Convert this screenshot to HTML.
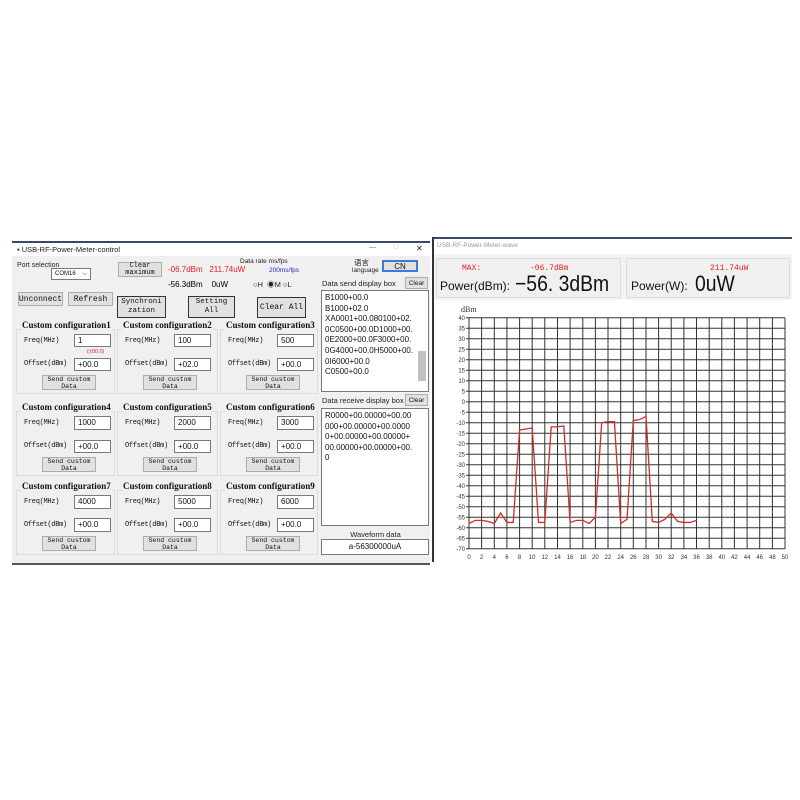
<!DOCTYPE html>
<html><head><meta charset="utf-8"><style>
body{margin:0;width:800px;height:800px;background:#fff;position:relative;overflow:hidden;font-family:"Liberation Sans","Noto Sans CJK SC",sans-serif;}
.a{position:absolute;white-space:nowrap;}
.t{font-size:7px;color:#222;}
.m{font-family:"Liberation Mono",monospace;}
.btn{position:absolute;background:#e1e1e1;border:1px solid #adadad;box-sizing:border-box;font-family:"Liberation Mono",monospace;font-size:7px;text-align:center;line-height:7px;color:#111;display:flex;align-items:center;justify-content:center;}
.inp{position:absolute;background:#fff;border:1px solid #7a7a7a;box-sizing:border-box;font-size:8px;line-height:11px;padding-left:3px;color:#111;}
.grp{position:absolute;border:1px solid #dcdcdc;box-sizing:border-box;}
.gh{position:absolute;font-family:"Liberation Serif",serif;font-weight:bold;font-size:9px;background:#f0f0f0;padding:0 1px;color:#111;}
.lab{position:absolute;font-family:"Liberation Mono",monospace;font-size:7px;letter-spacing:-0.3px;color:#111;}
.red{color:#d22;}
</style></head><body>
<div class="a" style="left:12px;top:241px;width:418px;height:320px;background:#f0f0f0;border-top:2px solid #3a4a66;border-bottom:2px solid #555;"></div>
<div class="a" style="left:12px;top:243px;width:418px;height:13px;background:#fff;"></div>
<div class="a t" style="left:17px;top:245px;font-size:7.5px;">▪ USB-RF-Power-Meter-control</div>
<div class="a t" style="left:369px;top:244px;color:#666;">—</div>
<div class="a t" style="left:394px;top:244px;color:#bbb;">□</div>
<div class="a t" style="left:416px;top:244px;font-size:8px;">✕</div>

<div class="a t" style="left:17px;top:262px;">Port selection</div>
<div class="inp" style="left:51px;top:268px;width:40px;height:12px;font-size:6px;line-height:10px;">COM16 <span style="float:right;margin-right:3px">⌵</span></div>
<div class="btn" style="left:118px;top:262px;width:44px;height:15px;">Clear<br>maximum</div>
<div class="a red" style="left:168px;top:265px;font-size:8px;">-06.7dBm&nbsp;&nbsp;&nbsp;211.74uW</div>
<div class="a" style="left:168px;top:280px;font-size:8px;">-56.3dBm&nbsp;&nbsp;&nbsp;&nbsp;0uW</div>
<div class="a t" style="left:240px;top:258px;font-size:6.5px;">Data rate ms/fps</div>
<div class="a" style="left:269px;top:267px;font-size:6.5px;color:#22c;">200ms/fps</div>
<div class="a t" style="left:253px;top:279px;font-size:7.5px;">○H&nbsp;&nbsp;◉M ○L</div>
<div class="a t" style="left:354px;top:257px;font-size:7.5px;">语言</div>
<div class="a t" style="left:352px;top:267px;font-size:6.5px;">language</div>
<div class="btn" style="left:382px;top:260px;width:36px;height:12px;border:2px solid #3a7bd5;font-family:'Liberation Sans';font-size:8px;">CN</div>
<div class="a t" style="left:322px;top:279px;font-size:7.5px;">Data send display box</div>
<div class="btn" style="left:405px;top:277px;width:23px;height:12px;font-family:'Liberation Sans';font-size:6.5px;">Clear</div>
<div class="inp" style="left:321px;top:290px;width:108px;height:102px;font-size:8px;line-height:10.6px;padding-top:2px;overflow:hidden;">B1000+00.0<br>B1000+02.0<br>XA0001+00.080100+02.<br>0C0500+00.0D1000+00.<br>0E2000+00.0F3000+00.<br>0G4000+00.0H5000+00.<br>0I6000+00.0<br>C0500+00.0</div>
<div class="a" style="left:418px;top:351px;width:8px;height:30px;background:#c1c1c1;"></div>

<div class="btn" style="left:18px;top:292px;width:45px;height:14px;font-size:8px;">Unconnect</div>
<div class="btn" style="left:68px;top:292px;width:45px;height:14px;font-size:8px;">Refresh</div>
<div class="btn" style="left:117px;top:296px;width:49px;height:22px;border:1px solid #333;font-size:7.5px;line-height:9px;">Synchroni<br>zation</div>
<div class="btn" style="left:188px;top:296px;width:47px;height:22px;border:1px solid #333;font-size:7.5px;line-height:9px;">Setting<br>All</div>
<div class="btn" style="left:257px;top:297px;width:49px;height:21px;border:1px solid #333;font-size:8px;">Clear All</div>

<div class="grp" style="left:16px;top:329px;width:99px;height:65px;"></div><div class="gh" style="left:21px;top:320px;">Custom configuration1</div>
<div class="grp" style="left:117px;top:329px;width:101px;height:65px;"></div><div class="gh" style="left:122px;top:320px;">Custom configuration2</div>
<div class="grp" style="left:220px;top:329px;width:98px;height:65px;"></div><div class="gh" style="left:225px;top:320px;">Custom configuration3</div>
<div class="lab" style="left:24px;top:337px;">Freq(MHz)</div><div class="inp" style="left:74px;top:334px;width:37px;height:13px;">1</div>
<div class="lab" style="left:125px;top:337px;">Freq(MHz)</div><div class="inp" style="left:174px;top:334px;width:37px;height:13px;">100</div>
<div class="lab" style="left:228px;top:337px;">Freq(MHz)</div><div class="inp" style="left:277px;top:334px;width:37px;height:13px;">500</div>
<div class="a red" style="left:87px;top:349px;font-size:5.5px;">(±00.0)</div>
<div class="lab" style="left:24px;top:360px;">Offset(dBm)</div><div class="inp" style="left:74px;top:358px;width:37px;height:13px;">+00.0</div>
<div class="lab" style="left:125px;top:360px;">Offset(dBm)</div><div class="inp" style="left:174px;top:358px;width:37px;height:13px;">+02.0</div>
<div class="lab" style="left:228px;top:360px;">Offset(dBm)</div><div class="inp" style="left:277px;top:358px;width:37px;height:13px;">+00.0</div>
<div class="btn" style="left:42px;top:375px;width:54px;height:15px;font-size:6.5px;">Send custom<br>Data</div>
<div class="btn" style="left:143px;top:375px;width:54px;height:15px;font-size:6.5px;">Send custom<br>Data</div>
<div class="btn" style="left:246px;top:375px;width:54px;height:15px;font-size:6.5px;">Send custom<br>Data</div>

<div class="grp" style="left:16px;top:411px;width:99px;height:65px;"></div><div class="gh" style="left:21px;top:402px;">Custom configuration4</div>
<div class="grp" style="left:117px;top:411px;width:101px;height:65px;"></div><div class="gh" style="left:122px;top:402px;">Custom configuration5</div>
<div class="grp" style="left:220px;top:411px;width:98px;height:65px;"></div><div class="gh" style="left:225px;top:402px;">Custom configuration6</div>
<div class="lab" style="left:24px;top:419px;">Freq(MHz)</div><div class="inp" style="left:74px;top:416px;width:37px;height:14px;">1000</div>
<div class="lab" style="left:125px;top:419px;">Freq(MHz)</div><div class="inp" style="left:174px;top:416px;width:37px;height:14px;">2000</div>
<div class="lab" style="left:228px;top:419px;">Freq(MHz)</div><div class="inp" style="left:277px;top:416px;width:37px;height:14px;">3000</div>
<div class="lab" style="left:24px;top:442px;">Offset(dBm)</div><div class="inp" style="left:74px;top:440px;width:37px;height:13px;">+00.0</div>
<div class="lab" style="left:125px;top:442px;">Offset(dBm)</div><div class="inp" style="left:174px;top:440px;width:37px;height:13px;">+00.0</div>
<div class="lab" style="left:228px;top:442px;">Offset(dBm)</div><div class="inp" style="left:277px;top:440px;width:37px;height:13px;">+00.0</div>
<div class="btn" style="left:42px;top:457px;width:54px;height:15px;font-size:6.5px;">Send custom<br>Data</div>
<div class="btn" style="left:143px;top:457px;width:54px;height:15px;font-size:6.5px;">Send custom<br>Data</div>
<div class="btn" style="left:246px;top:457px;width:54px;height:15px;font-size:6.5px;">Send custom<br>Data</div>

<div class="grp" style="left:16px;top:490px;width:99px;height:65px;"></div><div class="gh" style="left:21px;top:481px;">Custom configuration7</div>
<div class="grp" style="left:117px;top:490px;width:101px;height:65px;"></div><div class="gh" style="left:122px;top:481px;">Custom configuration8</div>
<div class="grp" style="left:220px;top:490px;width:98px;height:65px;"></div><div class="gh" style="left:225px;top:481px;">Custom configuration9</div>
<div class="lab" style="left:24px;top:498px;">Freq(MHz)</div><div class="inp" style="left:74px;top:495px;width:37px;height:14px;">4000</div>
<div class="lab" style="left:125px;top:498px;">Freq(MHz)</div><div class="inp" style="left:174px;top:495px;width:37px;height:14px;">5000</div>
<div class="lab" style="left:228px;top:498px;">Freq(MHz)</div><div class="inp" style="left:277px;top:495px;width:37px;height:14px;">6000</div>
<div class="lab" style="left:24px;top:521px;">Offset(dBm)</div><div class="inp" style="left:74px;top:518px;width:37px;height:14px;">+00.0</div>
<div class="lab" style="left:125px;top:521px;">Offset(dBm)</div><div class="inp" style="left:174px;top:518px;width:37px;height:14px;">+00.0</div>
<div class="lab" style="left:228px;top:521px;">Offset(dBm)</div><div class="inp" style="left:277px;top:518px;width:37px;height:14px;">+00.0</div>
<div class="btn" style="left:42px;top:536px;width:54px;height:15px;font-size:6.5px;">Send custom<br>Data</div>
<div class="btn" style="left:143px;top:536px;width:54px;height:15px;font-size:6.5px;">Send custom<br>Data</div>
<div class="btn" style="left:246px;top:536px;width:54px;height:15px;font-size:6.5px;">Send custom<br>Data</div>

<div class="a t" style="left:322px;top:396px;font-size:7.5px;">Data receive display box</div>
<div class="btn" style="left:405px;top:394px;width:23px;height:12px;font-family:'Liberation Sans';font-size:6.5px;">Clear</div>
<div class="inp" style="left:321px;top:408px;width:108px;height:118px;font-size:8px;line-height:10.6px;padding-top:2px;">R0000+00.00000+00.00<br>000+00.00000+00.0000<br>0+00.00000+00.00000+<br>00.00000+00.00000+00.<br>0</div>
<div class="a t" style="left:322px;top:530px;width:107px;text-align:center;font-size:7.5px;">Waveform data</div>
<div class="inp" style="left:321px;top:539px;width:108px;height:16px;text-align:center;padding:0;line-height:14px;font-size:8px;">a-56300000uA</div>

<div class="a" style="left:432px;top:237px;width:360px;height:2px;background:#3a4a66;"></div>
<div class="a" style="left:432px;top:237px;width:2px;height:325px;background:#333;"></div>
<div class="a" style="left:437px;top:242px;font-size:6.5px;color:#999;">USB-RF-Power-Meter-wave</div>
<div class="a" style="left:434px;top:254px;width:358px;height:46px;background:#f3f3f3;"></div>
<div class="a" style="left:436px;top:258px;width:185px;height:40px;background:#f0f0f0;border:1px solid #ddd;box-sizing:border-box;"></div>
<div class="a" style="left:626px;top:258px;width:164px;height:40px;background:#f0f0f0;border:1px solid #ddd;box-sizing:border-box;"></div>
<div class="a red m" style="left:462px;top:264px;font-size:8px;">MAX:</div>
<div class="a red m" style="left:530px;top:264px;font-size:8px;">-06.7dBm</div>
<div class="a red m" style="left:710px;top:264px;font-size:8px;">211.74uW</div>
<div class="a" style="left:440px;top:279px;font-size:12px;color:#111;">Power(dBm):</div>
<div class="a" style="left:515px;top:271px;font-size:22px;color:#111;transform:scaleX(0.88);transform-origin:left;">−56. 3dBm</div>
<div class="a" style="left:631px;top:279px;font-size:12px;color:#111;">Power(W):</div>
<div class="a" style="left:695px;top:271px;font-size:22px;color:#111;transform:scaleX(0.88);transform-origin:left;">0uW</div>

<svg class="a" style="left:0;top:0" width="800" height="800" font-family="Liberation Sans" font-size="6" fill="#333">
<text x="461" y="312" font-family="Liberation Serif" font-size="8">dBm</text>
<g stroke="#333" stroke-width="1">
<path d="M469 317.7V549M481.6 317.7V549M494.3 317.7V549M506.9 317.7V549M519.6 317.7V549M532.2 317.7V549M544.8 317.7V549M557.5 317.7V549M570.1 317.7V549M582.8 317.7V549M595.4 317.7V549M608 317.7V549M620.7 317.7V549M633.3 317.7V549M646 317.7V549M658.6 317.7V549M671.2 317.7V549M683.9 317.7V549M696.5 317.7V549M709.2 317.7V549M721.8 317.7V549M734.4 317.7V549M747.1 317.7V549M759.7 317.7V549M772.4 317.7V549M785 317.7V549"/>
<path d="M466 317.7H785M466 328.2H785M466 338.7H785M466 349.2H785M466 359.7H785M466 370.2H785M466 380.7H785M466 391.2H785M466 401.7H785M466 412.2H785M466 422.7H785M466 433.2H785M466 443.7H785M466 454.2H785M466 464.7H785M466 475.2H785M466 485.7H785M466 496.2H785M466 506.7H785M466 517.2H785M466 527.7H785M466 538.2H785M466 548.7H785"/>
</g>
<g text-anchor="end">
<text x="465" y="320">40</text><text x="465" y="330.5">35</text><text x="465" y="341">30</text><text x="465" y="351.5">25</text><text x="465" y="362">20</text><text x="465" y="372.5">15</text><text x="465" y="383">10</text><text x="465" y="393.5">5</text><text x="465" y="404">0</text><text x="465" y="414.5">-5</text><text x="465" y="425">-10</text><text x="465" y="435.5">-15</text><text x="465" y="446">-20</text><text x="465" y="456.5">-25</text><text x="465" y="467">-30</text><text x="465" y="477.5">-35</text><text x="465" y="488">-40</text><text x="465" y="498.5">-45</text><text x="465" y="509">-50</text><text x="465" y="519.5">-55</text><text x="465" y="530">-60</text><text x="465" y="540.5">-65</text><text x="465" y="551">-70</text>
</g>
<g text-anchor="middle">
<text x="469" y="559">0</text><text x="481.6" y="559">2</text><text x="494.3" y="559">4</text><text x="506.9" y="559">6</text><text x="519.6" y="559">8</text><text x="532.2" y="559">10</text><text x="544.8" y="559">12</text><text x="557.5" y="559">14</text><text x="570.1" y="559">16</text><text x="582.8" y="559">18</text><text x="595.4" y="559">20</text><text x="608" y="559">22</text><text x="620.7" y="559">24</text><text x="633.3" y="559">26</text><text x="646" y="559">28</text><text x="658.6" y="559">30</text><text x="671.2" y="559">32</text><text x="683.9" y="559">34</text><text x="696.5" y="559">36</text><text x="709.2" y="559">38</text><text x="721.8" y="559">40</text><text x="734.4" y="559">42</text><text x="747.1" y="559">44</text><text x="759.7" y="559">46</text><text x="772.4" y="559">48</text><text x="785" y="559">50</text>
</g>
<polyline fill="none" stroke="#d42a2a" stroke-width="1.3" points="469,523.5 475.3,520.35 481.6,520.35 488,521.4 494.3,523.5 500.6,513 506.9,522.45 513.2,522.45 519.6,430.05 525.9,429 532.2,427.95 538.5,522.45 544.8,522.45 551.2,426.9 557.5,426.9 563.8,425.85 570.1,522.45 576.4,520.35 582.8,520.35 589.1,523.5 595.4,517.2 601.7,422.7 608,421.65 614.4,421.65 620.7,523.5 627,519.3 633.3,420.6 639.6,419.55 646,416.4 652.3,521.4 658.6,522.45 664.9,519.3 671.2,513 677.6,521.4 683.9,522.45 690.2,522.45 696.5,520.35"/>
</svg>
</body></html>
